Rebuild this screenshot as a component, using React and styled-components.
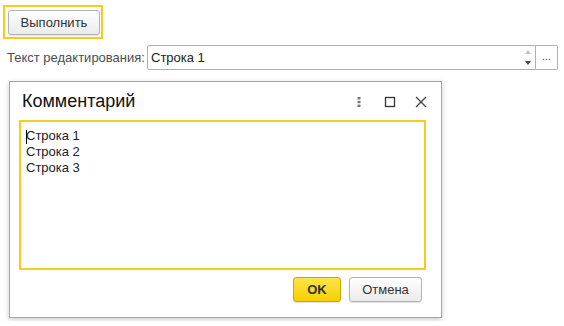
import styled, { createGlobalStyle } from "styled-components";

const GlobalStyle = createGlobalStyle`
  body {
    margin: 0;
    background: #fff;
    font-family: "Liberation Sans", Arial, sans-serif;
    font-size: 13px;
    color: #333;
  }
`;

export default function App() {
  return (
    <>
      <GlobalStyle />
      <Page>
        <FocusFrame>
          <Button>Выполнить</Button>
        </FocusFrame>
        <FieldRow>
          <Label>Текст редактирования:</Label>
          <InputBox>
            <InputText>Строка 1</InputText>
            <Spin>
              <Arrow up />
              <Arrow />
            </Spin>
          </InputBox>
          <ChoiceButton>...</ChoiceButton>
        </FieldRow>
        <Dialog>
          <TitleBar>
            <Title>Комментарий</Title>
            <TitleIcons>
              <svg width="12" height="12" viewBox="0 0 12 12">
                <rect x="4.5" y="1" width="3" height="2.4" fill="#777" />
                <rect x="4.5" y="4.8" width="3" height="2.4" fill="#777" />
                <rect x="4.5" y="8.6" width="3" height="2.4" fill="#777" />
              </svg>
              <svg width="12" height="12" viewBox="0 0 12 12">
                <rect x="1.5" y="1.5" width="9" height="9" fill="none" stroke="#333" strokeWidth="1.3" />
              </svg>
              <svg width="12" height="12" viewBox="0 0 12 12">
                <path d="M1 1 L11 11 M11 1 L1 11" stroke="#444" strokeWidth="1.3" />
              </svg>
            </TitleIcons>
          </TitleBar>
          <TextArea>
            <Caret />
            Строка 1<br />
            Строка 2<br />
            Строка 3
          </TextArea>
          <Footer>
            <Button primary>OK</Button>
            <Button wide>Отмена</Button>
          </Footer>
        </Dialog>
      </Page>
    </>
  );
}

const Page = styled.div`
  padding: 5px 0 0 3px;
  width: 564px;
  height: 321px;
  box-sizing: border-box;
`;

const FocusFrame = styled.div`
  display: inline-flex;
  border: 2px solid #f7cd1c;
  padding: 3px 1px 2px 3px;
`;

const Button = styled.div`
  display: flex;
  align-items: center;
  justify-content: center;
  box-sizing: border-box;
  height: 25px;
  width: ${(p) => (p.primary ? "48px" : p.wide ? "73px" : "92px")};
  border: 1px solid ${(p) => (p.primary ? "#c9a806" : "#b3b3b3")};
  border-radius: 3px;
  background: ${(p) =>
    p.primary
      ? "linear-gradient(#fde54a, #f6d000)"
      : "linear-gradient(#ffffff, #ebebeb)"};
  box-shadow: 0 1px 1px rgba(0, 0, 0, 0.12);
  font-size: 13px;
  font-weight: ${(p) => (p.primary ? "bold" : "normal")};
  color: #333;
`;

const FieldRow = styled.div`
  display: flex;
  align-items: center;
  margin-top: 6px;
  padding-left: 4px;
`;

const Label = styled.div`
  width: 140px;
  color: #4d4d4d;
`;

const InputBox = styled.div`
  display: flex;
  align-items: center;
  box-sizing: border-box;
  width: 389px;
  height: 25px;
  border: 1px solid #b0b0b0;
  border-radius: 2px 0 0 2px;
  padding-left: 3px;
`;

const InputText = styled.div`
  flex: 1;
  color: #222;
`;

const Spin = styled.div`
  display: flex;
  flex-direction: column;
  justify-content: space-between;
  height: 15px;
  margin-right: 4px;
`;

const Arrow = styled.div`
  width: 0;
  height: 0;
  border-left: 3px solid transparent;
  border-right: 3px solid transparent;
  ${(p) =>
    p.up
      ? "border-bottom: 4px solid #c4c4c4;"
      : "border-top: 4px solid #444;"}
`;

const ChoiceButton = styled.div`
  display: flex;
  align-items: center;
  justify-content: center;
  box-sizing: border-box;
  width: 22px;
  height: 25px;
  border: 1px solid #b0b0b0;
  border-left: none;
  border-radius: 0 2px 2px 0;
  font-size: 11px;
  padding-bottom: 4px;
  color: #444;
`;

const Dialog = styled.div`
  box-sizing: border-box;
  width: 433px;
  height: 237px;
  margin: 11px 0 0 6px;
  border: 1px solid #a6a6a6;
  background: #fff;
  box-shadow: 0 2px 6px rgba(0, 0, 0, 0.2);
  display: flex;
  flex-direction: column;
  padding: 0 15px 0 9px;
`;

const TitleBar = styled.div`
  display: flex;
  align-items: center;
  justify-content: space-between;
  height: 38px;
  padding-left: 3px;
`;

const Title = styled.div`
  font-size: 18px;
  color: #111;
  padding-top: 1px;
`;

const TitleIcons = styled.div`
  display: flex;
  gap: 19px;
  margin-right: -1px;
  padding-top: 1px;
`;

const TextArea = styled.div`
  box-sizing: border-box;
  height: 150px;
  border: 2px solid #f7cd1c;
  padding: 6px 5px;
  line-height: 16px;
  color: #222;
  position: relative;
`;

const Caret = styled.span`
  position: absolute;
  left: 5px;
  top: 8px;
  width: 1px;
  height: 14px;
  background: #000;
`;

const Footer = styled.div`
  display: flex;
  justify-content: flex-end;
  gap: 8px;
  margin-top: 7px;
  padding-right: 4px;
`;
